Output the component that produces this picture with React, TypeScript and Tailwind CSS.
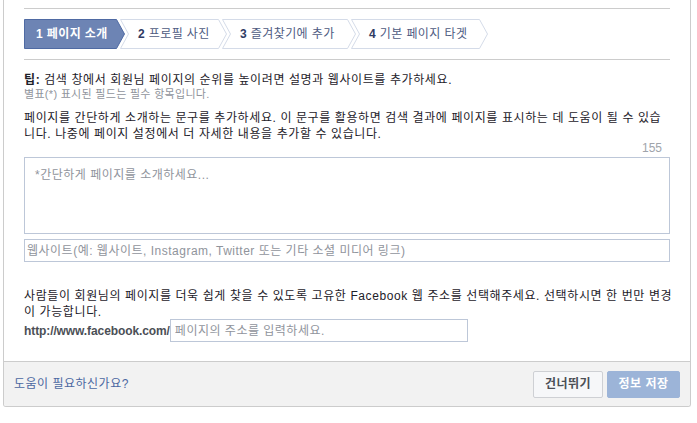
const font = { fontFamily: '"Liberation Sans", "Noto Sans CJK KR", sans-serif' };

interface StepType {
    num: number
    label: string
    width: number
    active?: boolean
    first?: boolean
}

const steps: StepType[] = [
    { num: 1, label: "페이지 소개", width: 101, active: true, first: true },
    { num: 2, label: "프로필 사진", width: 107 },
    { num: 3, label: "즐겨찾기에 추가", width: 134 },
    { num: 4, label: "기본 페이지 타겟", width: 137 },
];

const Step = ({ step }: { step: StepType }) => {
    const w = step.width;
    const points = step.first
        ? `0.5,0.5 ${w - 8.5},0.5 ${w - 0.5},15 ${w - 8.5},29.5 0.5,29.5`
        : `0.5,0.5 ${w - 8.5},0.5 ${w - 0.5},15 ${w - 8.5},29.5 0.5,29.5 8.5,15`;
    return (
        <div
            className={`relative h-[30px] flex items-center shrink-0 ${step.first ? "pl-[12px]" : "-ml-[5px] pl-[18px]"}`}
            style={{ width: w }}
        >
            <svg className="absolute inset-0" width={w} height={30}>
                <polygon
                    points={points}
                    fill={step.active ? "#6d84b4" : "#ffffff"}
                    stroke={step.active ? "#4f6aa3" : "#d4dbe8"}
                    strokeWidth={1}
                />
            </svg>
            <span className={`relative text-[12px] tracking-[0.4px] whitespace-nowrap ${step.active ? "text-white font-bold" : "text-[#4e5b82]"}`}>
                <b className={step.active ? "" : "text-[#2f3b63]"}>{step.num}</b> {step.label}
            </span>
        </div>
    );
};

export default function App() {
    return (
        <div className="w-[697px] h-[423px] bg-white overflow-hidden" style={font}>
            <div className="ml-[3px] w-[688px] border-x border-b border-[#cccccc] rounded-b-[3px] overflow-hidden">
                <div className="px-[20px] pt-[8px] pb-[19px]">
                    <div className="border-t border-[#cccccc] pt-[10px] pb-[10px] border-b flex">
                        {steps.map((s) => <Step key={s.num} step={s} />)}
                    </div>

                    <div className="pt-[12px] text-[12px] leading-[16px] text-[#1d2129] tracking-[0.6px]">
                        <p className="whitespace-nowrap"><b>팁:</b> 검색 창에서 회원님 페이지의 순위를 높이려면 설명과 웹사이트를 추가하세요.</p>
                        <p className="text-[11px] leading-[13px] text-[#90949c] tracking-[0.3px]">별표(*) 표시된 필드는 필수 항목입니다.</p>
                        <p className="mt-[9px] whitespace-nowrap">
                            페이지를 간단하게 소개하는 문구를 추가하세요. 이 문구를 활용하면 검색 결과에 페이지를 표시하는 데 도움이 될 수 있습<br />
                            니다. 나중에 페이지 설정에서 더 자세한 내용을 추가할 수 있습니다.
                        </p>
                        <div className="text-right text-[#a0a4ab] pr-[8px] leading-[16px] -mt-[2px] tracking-normal">155</div>
                        <textarea
                            placeholder="*간단하게 페이지를 소개하세요..."
                            className="block w-full h-[77px] mt-[1px] border border-[#bdc7d8] px-[10px] py-[9px] text-[12px] tracking-[0.5px] resize-none outline-none placeholder:text-[#90949c]"
                        />
                        <input
                            placeholder="웹사이트(예: 웹사이트, Instagram, Twitter 또는 기타 소셜 미디어 링크)"
                            className="block w-full h-[23px] mt-[5px] border border-[#bdc7d8] px-[2px] text-[12px] tracking-[0.5px] outline-none placeholder:text-[#90949c]"
                        />
                        <p className="mt-[26px] whitespace-nowrap">
                            사람들이 회원님의 페이지를 더욱 쉽게 찾을 수 있도록 고유한 Facebook 웹 주소를 선택해주세요. 선택하시면 한 번만 변경<br />
                            이 가능합니다.
                        </p>
                        <div className="flex items-center -mt-[1px]">
                            <b className="text-[#4b4f56] tracking-[-0.1px]">http://www.facebook.com/</b>
                            <input
                                placeholder="페이지의 주소를 입력하세요."
                                className="w-[298px] h-[23px] border border-[#bdc7d8] px-[4px] text-[12px] tracking-[0.5px] outline-none placeholder:text-[#90949c]"
                            />
                        </div>
                    </div>
                </div>

                <div className="bg-[#f2f2f2] border-t border-[#cccccc] h-[45px] flex items-center justify-between px-[10px]">
                    <a className="text-[12px] text-[#4b67a1] tracking-[0.5px]">도움이 필요하신가요?</a>
                    <div className="flex gap-[4px]">
                        <button className="w-[70px] h-[27px] bg-[#f6f7f9] border border-[#ced0d4] rounded-[2px] text-[12px] font-bold text-[#4b4f56] tracking-[0.5px]">건너뛰기</button>
                        <button className="w-[73px] h-[27px] bg-[#9cb4d8] border border-[#9cb4d8] rounded-[2px] text-[12px] font-bold text-white tracking-[0.5px]">정보 저장</button>
                    </div>
                </div>
            </div>
        </div>
    );
}
